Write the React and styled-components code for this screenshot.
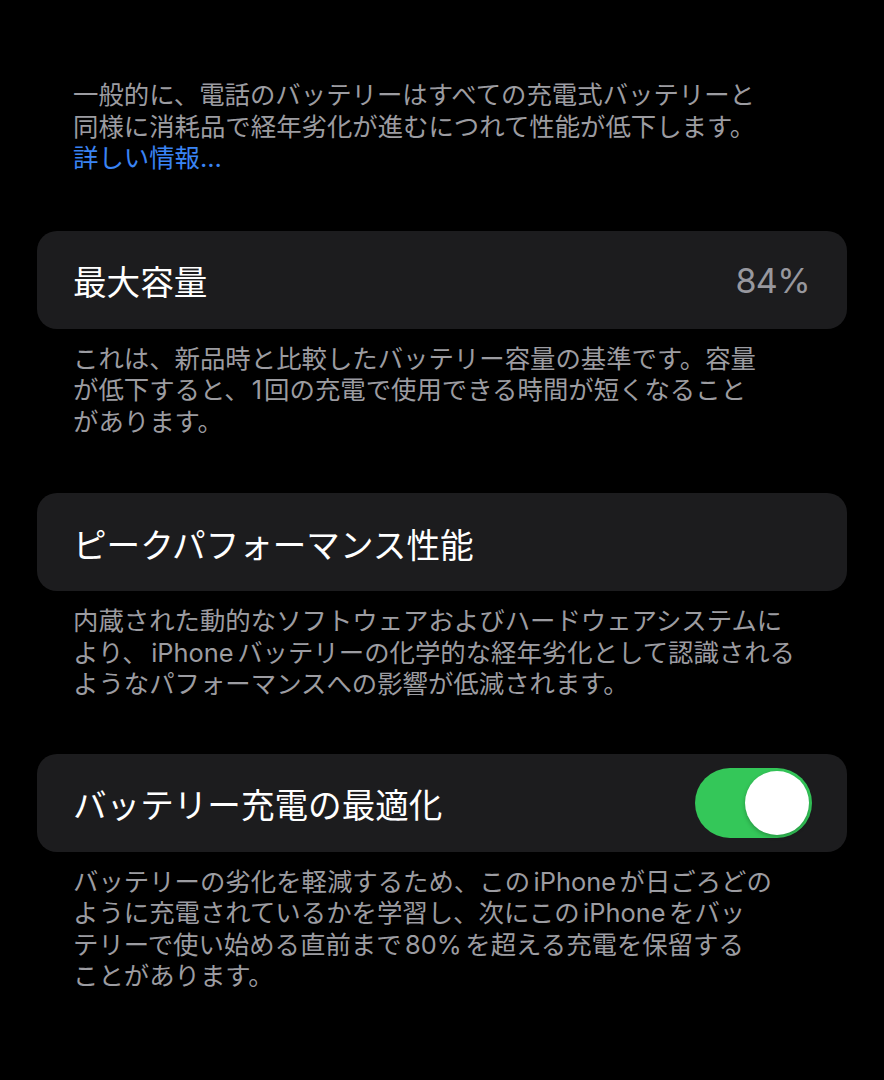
import React from "react";
import styled, { createGlobalStyle } from "styled-components";

const Global = createGlobalStyle`
  html, body {
    margin: 0;
    padding: 0;
    background: #000;
  }
  body {
    font-family: Inter, "Noto Sans CJK JP", "Noto Sans", sans-serif;
    -webkit-font-smoothing: antialiased;
  }
`;

const Page = styled.div`
  width: 884px;
  min-height: 1080px;
  box-sizing: border-box;
  padding: 79px 37px 40px;
  background: #000;
  display: flex;
  flex-direction: column;
`;

const Note = styled.p`
  margin: 0;
  padding: 0 36px;
  font-size: 25.4px;
  line-height: 31.5px;
  color: #9c9ca1;
  white-space: nowrap;
  letter-spacing: 0;
`;

const Link = styled.span`
  color: #3a84f4;
`;

const Latin = styled.span`
  margin: 0 ${(p) => (p.$tight ? "0.08em" : "0.14em")};
`;

const Section = styled.section`
  display: flex;
  flex-direction: column;
  gap: 14px;
  margin-top: ${(p) => p.$gap}px;
`;

const Card = styled.div`
  height: 98px;
  box-sizing: border-box;
  border-radius: 20px;
  background: #1c1c1e;
  display: flex;
  align-items: center;
  justify-content: space-between;
  padding: 0 36px;
`;

const Title = styled.span`
  font-size: 33.6px;
  color: #ffffff;
  letter-spacing: 0;
  margin-top: 2px;
`;

const Value = styled.span`
  font-size: 34px;
  color: #98989e;
  letter-spacing: -0.6px;
  margin-right: 1px;
  margin-top: 2px;
`;

const Toggle = styled.div`
  width: 117px;
  height: 70px;
  border-radius: 35px;
  background: #34c759;
  display: flex;
  align-items: center;
  justify-content: ${(p) => (p.$on ? "flex-end" : "flex-start")};
  padding: 3px;
  box-sizing: border-box;
  margin-right: -1px;
`;

const Knob = styled.div`
  width: 64px;
  height: 64px;
  border-radius: 50%;
  background: #ffffff;
  box-shadow: 0 2px 4px rgba(0, 0, 0, 0.25);
`;

export default function App() {
  return (
    <>
      <Global />
      <Page>
        <Note>
          一般的に、電話のバッテリーはすべての充電式バッテリーと
          <br />
          同様に消耗品で経年劣化が進むにつれて性能が低下します。
          <br />
          <Link>詳しい情報...</Link>
        </Note>

        <Section $gap={57}>
          <Card>
            <Title>最大容量</Title>
            <Value>84%</Value>
          </Card>
          <Note>
            これは、新品時と比較したバッテリー容量の基準です。容量
            <br />
            が低下すると、<Latin $tight>1</Latin>回の充電で使用できる時間が短くなること
            <br />
            があります。
          </Note>
        </Section>

        <Section $gap={56}>
          <Card>
            <Title>ピークパフォーマンス性能</Title>
          </Card>
          <Note>
            内蔵された動的なソフトウェアおよびハードウェアシステムに
            <br />
            より、<Latin>iPhone</Latin>バッテリーの化学的な経年劣化として認識される
            <br />
            ようなパフォーマンスへの影響が低減されます。
          </Note>
        </Section>

        <Section $gap={54}>
          <Card>
            <Title>バッテリー充電の最適化</Title>
            <Toggle $on>
              <Knob />
            </Toggle>
          </Card>
          <Note>
            バッテリーの劣化を軽減するため、この<Latin>iPhone</Latin>が日ごろどの
            <br />
            ように充電されているかを学習し、次にこの<Latin>iPhone</Latin>をバッ
            <br />
            テリーで使い始める直前まで<Latin>80%</Latin>を超える充電を保留する
            <br />
            ことがあります。
          </Note>
        </Section>
      </Page>
    </>
  );
}
